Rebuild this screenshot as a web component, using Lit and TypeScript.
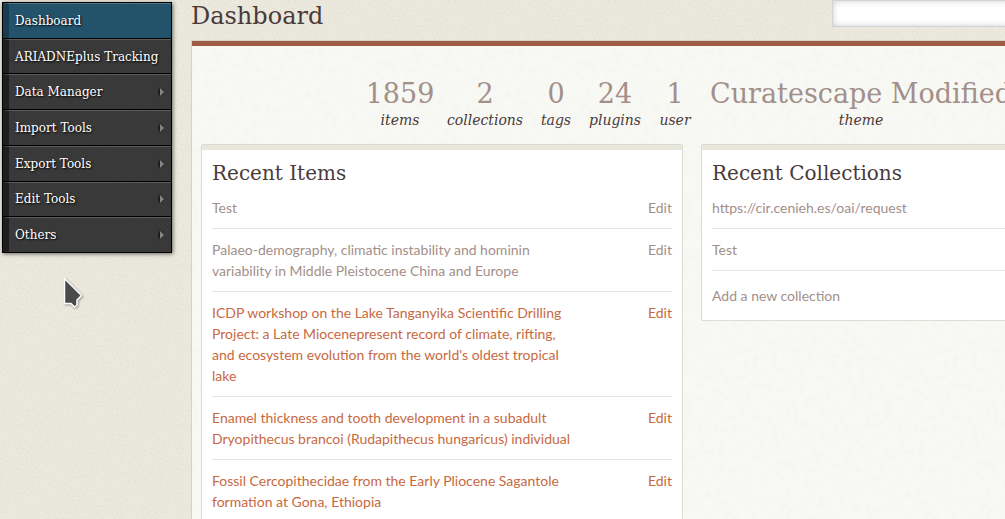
import { LitElement, html, css, nothing } from "lit";
import { customElement } from "lit/decorators.js";
import { classMap } from "lit/directives/class-map.js";

interface NavEntry {
  label: string;
  current?: boolean;
  submenu?: boolean;
}

const NAV: NavEntry[] = [
  { label: "Dashboard", current: true },
  { label: "ARIADNEplus Tracking" },
  { label: "Data Manager", submenu: true },
  { label: "Import Tools", submenu: true },
  { label: "Export Tools", submenu: true },
  { label: "Edit Tools", submenu: true },
  { label: "Others", submenu: true },
];

const STATS = [
  { value: "1859", label: "items" },
  { value: "2", label: "collections" },
  { value: "0", label: "tags" },
  { value: "24", label: "plugins" },
  { value: "1", label: "user" },
  { value: "Curatescape Modified", label: "theme" },
];

const ITEMS = [
  { title: "Test", visited: true },
  { title: "Palaeo-demography, climatic instability and hominin variability in Middle Pleistocene China and Europe", visited: true },
  { title: "ICDP workshop on the Lake Tanganyika Scientific Drilling Project: a Late Miocenepresent record of climate, rifting, and ecosystem evolution from the world's oldest tropical lake", visited: false },
  { title: "Enamel thickness and tooth development in a subadult Dryopithecus brancoi (Rudapithecus hungaricus) individual", visited: false },
  { title: "Fossil Cercopithecidae from the Early Pliocene Sagantole formation at Gona, Ethiopia", visited: false },
];

const COLLECTIONS = ["https://cir.cenieh.es/oai/request", "Test"];

@customElement("side-nav")
export class SideNav extends LitElement {
  static styles = css`
    :host {
      display: block;
    }
    .list {
      display: flex;
      flex-direction: column;
      height: 250px;
      margin: 0;
      padding: 0 0 1px;
      list-style: none;
      background: #000;
      box-shadow: 1px 1px 4px rgba(0, 0, 0, 0.55);
    }
    .entry {
      flex: 1;
      display: flex;
      padding: 1px 1px 0;
    }
    .link {
      flex: 1;
      display: flex;
      align-items: center;
      justify-content: space-between;
      padding: 0 6px;
      border-left: 6px solid #1f1f1f;
      border-top: 1px solid #5c5c5c;
      background: repeating-linear-gradient(45deg, #373737 0 1px, #3a3a3a 1px 3px);
      color: #fff;
      font: 12px "DejaVu Serif", serif;
      white-space: nowrap;
      text-decoration: none;
      text-shadow: 1px 1px 2px #000;
    }
    .link.current {
      border-left-color: #183b4d;
      border-top-color: #4b7384;
      background: repeating-linear-gradient(45deg, #215068 0 1px, #24546c 1px 3px);
    }
    .arrow {
      width: 6px;
      height: 10px;
      fill: #858585;
      filter: drop-shadow(-1px 0 1px #000);
    }
  `;

  render() {
    return html`<nav aria-label="Main">
      <ul class="list">
        ${NAV.map(
          (n) => html`<li class="entry">
            <a href="#" class=${classMap({ link: true, current: !!n.current })}>
              <span>${n.label}</span>
              ${n.submenu
                ? html`<svg class="arrow" viewBox="0 0 6 10" aria-hidden="true"><path d="M1 1 5 5 1 9Z" /></svg>`
                : nothing}
            </a>
          </li>`
        )}
      </ul>
    </nav>`;
  }
}

@customElement("dash-card")
export class DashCard extends LitElement {
  static properties = { heading: {} };
  declare heading: string;

  static styles = css`
    :host {
      display: block;
      border: 1px solid #dcdcd6;
      border-radius: 2px;
      background: #fff;
    }
    .box {
      padding: 9px 10px 14px;
      border-top: 5px solid #e9e7db;
    }
    .heading {
      margin: 0;
      color: #4a3a3a;
      font: 20px/28px "DejaVu Serif", serif;
    }
  `;

  render() {
    return html`<section class="box">
      <h2 class="heading">${this.heading}</h2>
      <slot></slot>
    </section>`;
  }
}

@customElement("app-root")
export class AppRoot extends LitElement {
  static styles = css`
    :host {
      display: grid;
      grid-template-columns: 170px minmax(1001px, 1fr);
      column-gap: 19px;
      box-sizing: border-box;
      height: 100vh;
      padding-left: 2px;
      overflow: auto;
      scrollbar-width: none;
      background-color: #ece9de;
      background-image: url("data:image/svg+xml,%3Csvg xmlns='http://www.w3.org/2000/svg' width='160' height='160'%3E%3Cfilter id='n'%3E%3CfeTurbulence type='fractalNoise' baseFrequency='.5' numOctaves='3' stitchTiles='stitch'/%3E%3CfeColorMatrix values='0 0 0 0 .5 0 0 0 0 .48 0 0 0 0 .38 .35 0 0 0 -.13'/%3E%3C/filter%3E%3Crect width='160' height='160' filter='url(%23n)'/%3E%3C/svg%3E");
      font: 14px/21px Lato, sans-serif;
    }
    .side {
      padding-top: 2px;
    }
    .main {
      display: flex;
      flex-direction: column;
    }
    .header {
      display: flex;
      justify-content: space-between;
      align-items: flex-start;
      height: 40px;
    }
    .title {
      margin: 0;
      color: #4a3a3a;
      font: 24px/32px "DejaVu Serif", serif;
    }
    .search {
      box-sizing: border-box;
      width: 360px;
      height: 27px;
      border: 1px solid #d3d3d3;
      background: #fff;
      box-shadow: inset 0 0 6px #ccc;
    }
    .panel {
      flex: 1;
      padding: 30px 9px 20px;
      border: 1px solid #d3d2c5;
      border-width: 1px 0 0 1px;
      background: #f8f9f4 url("data:image/svg+xml,%3Csvg xmlns='http://www.w3.org/2000/svg' width='200' height='200'%3E%3Cfilter id='n'%3E%3CfeTurbulence type='fractalNoise' baseFrequency='.15' numOctaves='3' stitchTiles='stitch'/%3E%3CfeColorMatrix values='0 0 0 0 .5 0 0 0 0 .5 0 0 0 0 .42 .12 0 0 0 -.05'/%3E%3C/filter%3E%3Crect width='200' height='200' filter='url(%23n)'/%3E%3C/svg%3E");
      box-shadow: inset 0 5px #9f5b43;
    }
    .stats {
      display: grid;
      grid-template-columns: 58px 76px 30px 52px 32px 304px;
      gap: 18px;
      justify-content: center;
      margin-bottom: 16px;
    }
    .stat {
      display: flex;
      flex-direction: column;
      align-items: center;
      padding-top: 5px;
      text-decoration: none;
      white-space: nowrap;
    }
    .value {
      color: #a38f8a;
      font: 27px/36px "DejaVu Serif", serif;
    }
    .label {
      color: #4a3a3a;
      font: italic 14px/16px "DejaVu Serif", serif;
    }
    .cards {
      display: grid;
      grid-template-columns: 1fr 1fr;
      gap: 18px;
      align-items: start;
    }
    .rows {
      margin: 0;
      padding: 0;
      list-style: none;
    }
    .row {
      display: flex;
      justify-content: space-between;
      padding: 10px 0;
      border-bottom: 1px solid #e5e5e5;
    }
    .name {
      flex: 0 0 79%;
    }
    .link {
      color: #c76941;
      text-decoration: none;
    }
    .visited {
      color: #a38f8a;
    }
    .add {
      margin: 14px 0 0;
    }
    .pointer {
      position: absolute;
      left: 62px;
      top: 275px;
      width: 24px;
      height: 36px;
      filter: drop-shadow(1px 1px 1px rgba(0, 0, 0, 0.35));
      pointer-events: none;
    }
  `;

  render() {
    return html`
      <side-nav class="side"></side-nav>
      <main class="main">
        <header class="header">
          <h1 class="title">Dashboard</h1>
          <input class="search" type="search" aria-label="Search" />
        </header>
        <div class="panel">
          <div class="stats">
            ${STATS.map(
              (s) => html`<a class="stat" href="#"><span class="value">${s.value}</span><span class="label">${s.label}</span></a>`
            )}
          </div>
          <div class="cards">
            <dash-card .heading=${"Recent Items"}>
              <ul class="rows">
                ${ITEMS.map((i) => {
                  const link = classMap({ link: true, visited: i.visited });
                  return html`<li class="row">
                    <span class="name"><a class=${link} href="#">${i.title}</a></span>
                    <a class=${link} href="#">Edit</a>
                  </li>`;
                })}
              </ul>
            </dash-card>
            <dash-card .heading=${"Recent Collections"}>
              <ul class="rows">
                ${COLLECTIONS.map((c) => html`<li class="row"><a class="link visited" href="#">${c}</a></li>`)}
              </ul>
              <p class="add"><a class="link visited" href="#">Add a new collection</a></p>
            </dash-card>
          </div>
        </div>
      </main>
      <svg class="pointer" viewBox="0 0 24 36" aria-hidden="true">
        <path d="M2.5 3.5V28.5H9L12.5 32L15 30V25L19.5 20.5Z" fill="#4a4a4a" stroke="#fff" stroke-width="1.5" />
      </svg>
    `;
  }
}
